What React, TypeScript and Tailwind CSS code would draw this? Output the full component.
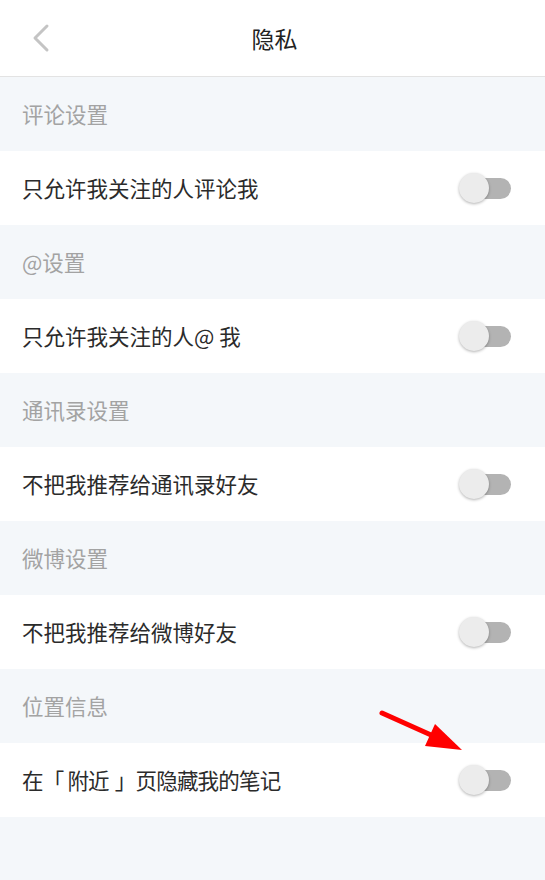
import React, { useState } from "react";

const sections: { title: string; label: React.ReactNode }[] = [
  { title: "评论设置", label: "只允许我关注的人评论我" },
  { title: "@设置", label: "只允许我关注的人@ 我" },
  { title: "通讯录设置", label: "不把我推荐给通讯录好友" },
  { title: "微博设置", label: "不把我推荐给微博好友" },
  {
    title: "位置信息",
    label: (
      <span className="tracking-[-0.8px]">
        在<span className="mr-[4px]">「</span>附近<span className="ml-[6px]">」</span>页隐藏我的笔记
      </span>
    ),
  },
];

function Toggle() {
  const [on, setOn] = useState(false);
  return (
    <button
      type="button"
      onClick={() => setOn(!on)}
      className="relative h-[30px] w-[52px] shrink-0"
    >
      <span className="absolute right-0 top-[5px] h-[21px] w-[44px] rounded-full bg-[#b3b3b3]" />
      <span
        className={
          on
            ? "absolute right-0 top-0 h-[30px] w-[30px] rounded-full bg-[#ff2442] shadow-[0_1px_3px_rgba(0,0,0,0.3)]"
            : "absolute left-0 top-0 h-[30px] w-[30px] rounded-full bg-[#ececec] shadow-[0_1px_3px_rgba(0,0,0,0.3)]"
        }
      />
    </button>
  );
}

export default function App() {
  return (
    <div className="relative min-h-[880px] w-full bg-[#f4f7fa] font-['Noto_Sans_CJK_SC','Noto_Sans',sans-serif]">
      {/* header */}
      <div className="grid h-[77px] grid-cols-[1fr_auto_1fr] items-center border-b border-[#e3e3e3] bg-white">
        <div className="pl-[30px]">
          <svg width="22" height="30" viewBox="0 0 22 30" fill="none">
            <path
              d="M17 3 L5 15 L17 27"
              stroke="#c4c4c4"
              strokeWidth="3"
              strokeLinecap="round"
              strokeLinejoin="round"
            />
          </svg>
        </div>
        <h1 className="pl-[4px] text-[23px] text-[#222]">隐私</h1>
        <div />
      </div>

      {sections.map((s) => (
        <div key={s.title} className="flex flex-col">
          <div className="flex h-[74px] items-center px-[22px] text-[21.5px] text-[#a3a3a3]">
            {s.title}
          </div>
          <div className="flex h-[74px] items-center justify-between bg-white pl-[22px] pr-[34px]">
            <span className="whitespace-nowrap text-[21.5px] text-[#2b2b2b]">{s.label}</span>
            <Toggle />
          </div>
        </div>
      ))}

      {/* annotation arrow */}
      <svg
        className="pointer-events-none absolute left-0 top-0"
        width="545"
        height="880"
        viewBox="0 0 545 880"
      >
        <line
          x1="382"
          y1="713"
          x2="440"
          y2="739"
          stroke="#ff0000"
          strokeWidth="5"
          strokeLinecap="round"
        />
        <polygon points="462,750 435,724 425,746" fill="#ff0000" />
      </svg>
    </div>
  );
}
